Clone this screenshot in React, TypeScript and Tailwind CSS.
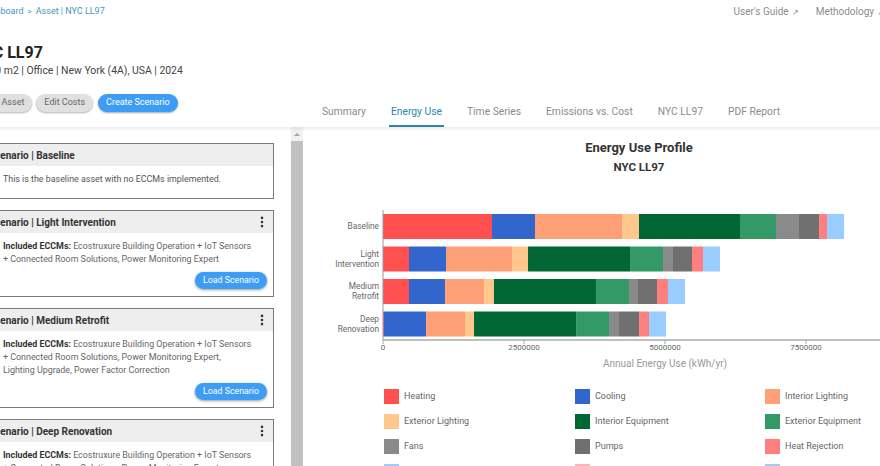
import { EllipsisVertical } from "lucide-react";

const categories = [
  { name: "Heating", color: "#ff4f4f" },
  { name: "Cooling", color: "#3366cc" },
  { name: "Interior Lighting", color: "#ff9f77" },
  { name: "Exterior Lighting", color: "#ffc78c" },
  { name: "Interior Equipment", color: "#006633" },
  { name: "Exterior Equipment", color: "#339966" },
  { name: "Fans", color: "#8a8a8a" },
  { name: "Pumps", color: "#707070" },
  { name: "Heat Rejection", color: "#ff7f7f" },
  { name: "Humidification", color: "#99ccff" },
  { name: "Heat Recovery", color: "#ffb3b3" },
  { name: "Water Systems", color: "#a8c8f0" },
  { name: "Refrigeration", color: "#c6a4e6" },
  { name: "Generators", color: "#e6d27a" },
];

// kWh/yr per end use, same order as categories
const rows = [
  { label: ["Baseline"], values: [1933000, 762000, 1543000, 301000, 1791000, 638000, 408000, 355000, 142000, 301000] },
  { label: ["Light", "Intervention"], values: [461000, 656000, 1170000, 284000, 1809000, 585000, 177000, 337000, 195000, 301000] },
  { label: ["Medium", "Retrofit"], values: [461000, 638000, 691000, 177000, 1809000, 585000, 160000, 337000, 195000, 301000] },
  { label: ["Deep", "Renovation"], values: [18000, 745000, 691000, 160000, 1809000, 585000, 177000, 355000, 177000, 301000] },
];

const scenarios = [
  { name: "Light Intervention", lines: ["Ecostruxure Building Operation + IoT Sensors", "+ Connected Room Solutions, Power Monitoring Expert"] },
  { name: "Medium Retrofit", lines: ["Ecostruxure Building Operation + IoT Sensors", "+ Connected Room Solutions, Power Monitoring Expert,", "Lighting Upgrade, Power Factor Correction"] },
  { name: "Deep Renovation", lines: ["Ecostruxure Building Operation + IoT Sensors", "+ Connected Room Solutions, Power Monitoring Expert,", "Lighting Upgrade, Power Factor Correction, HVAC Upgrade"] },
];

const tabs = ["Summary", "Energy Use", "Time Series", "Emissions vs. Cost", "NYC LL97", "PDF Report"];

function EnergyChart() {
  const x0 = 79;
  const scale = 141 / 2500000;
  const axisY = 213;
  return (
    <svg width="590" height="253" className="block">
      <text x="335" y="24.5" textAnchor="middle" fontSize="13" fontWeight="700" fill="#333">
        Energy Use Profile
      </text>
      <text x="335" y="44" textAnchor="middle" fontSize="11.5" fontWeight="700" fill="#333">
        NYC LL97
      </text>
      {rows.map((row, i) => {
        const top = 87 + i * 32.5;
        let x = x0;
        return (
          <g key={i}>
            {row.values.map((v, j) => {
              const w = v * scale;
              const rect = <rect key={j} x={x} y={top} width={w} height={25} fill={categories[j].color} />;
              x += w;
              return rect;
            })}
            {row.label.map((l, k) => (
              <text
                key={k}
                x="75"
                y={top + 15 + (k - (row.label.length - 1) / 2) * 10}
                textAnchor="end"
                fontSize="8.3"
                fill="#666"
              >
                {l}
              </text>
            ))}
          </g>
        );
      })}
      <line x1={x0} y1="83" x2={x0} y2={axisY} stroke="#999" strokeWidth="1" />
      <line x1={x0} y1={axisY} x2="590" y2={axisY} stroke="#aaa" strokeWidth="1.5" />
      {[0, 2500000, 5000000, 7500000].map((t) => (
        <g key={t}>
          <line x1={x0 + t * scale} y1={axisY} x2={x0 + t * scale} y2={axisY + 4} stroke="#aaa" />
          <text x={x0 + t * scale} y="222.5" textAnchor="middle" fontSize="8" fill="#666">
            {t}
          </text>
        </g>
      ))}
      <text x="361" y="240" textAnchor="middle" fontSize="10" fill="#999">
        Annual Energy Use (kWh/yr)
      </text>
    </svg>
  );
}

function Card({ name, children, menu = true }: { name: string; children: React.ReactNode; menu?: boolean }) {
  return (
    <div className="border border-[#7a7a7a] bg-white">
      <div className="h-[22px] bg-[#eeeeee] flex items-center justify-between pl-[10px] pr-[4px]">
        <span className="text-[10px] font-bold text-[#333]">Scenario | {name}</span>
        {menu && <EllipsisVertical size={14} strokeWidth={2.5} className="text-[#333]" />}
      </div>
      {children}
    </div>
  );
}

export default function App() {
  return (
    <div className="w-[880px] h-[466px] overflow-hidden bg-white font-[Roboto,sans-serif]">
      <div className="-ml-[28px] w-[922px] h-full flex flex-col">
        <div className="h-[22px] pt-[1px] flex items-center justify-between pl-[8px] pr-[10px]">
          <div className="flex items-center gap-[4px] text-[9px] text-[#4796bd]">
            <span>Dashboard</span>
            <span className="text-[8px]">&gt;</span>
            <span>Asset | NYC LL97</span>
          </div>
          <div className="flex items-center gap-[17px] text-[10px] text-[#8c8c8c]">
            <span>
              User's Guide<span className="text-[8px] ml-[3px]">↗</span>
            </span>
            <span>
              Methodology<span className="text-[8px] ml-[3px]">↗</span>
            </span>
          </div>
        </div>

        <div className="flex relative z-10 shadow-[0_2px_3px_rgba(0,0,0,0.08)]">
          <div className="w-[332px] pt-[21px] pb-[15px]">
            <div className="text-[16px] leading-[20px] font-bold text-[#222]">NYC LL97</div>
            <div className="text-[10.4px] leading-[16px] text-[#444]">10000 m2 | Office | New York (4A), USA | 2024</div>
            <div className="flex gap-[4px] mt-[15px] ml-[4px]">
              <button className="h-[18px] px-[8px] rounded-full bg-[#e0e0e0] text-[9px] text-[#666] shadow-[0_1px_2px_rgba(0,0,0,0.3)]">
                Edit Asset
              </button>
              <button className="h-[18px] px-[8px] rounded-full bg-[#e0e0e0] text-[9px] text-[#666] shadow-[0_1px_2px_rgba(0,0,0,0.3)]">
                Edit Costs
              </button>
              <button className="h-[18px] px-[8px] ml-[1px] rounded-full bg-[#3d9cf5] text-[9px] text-white shadow-[0_1px_2px_rgba(0,0,0,0.35)]">
                Create Scenario
              </button>
            </div>
          </div>
          <div className="flex items-end gap-[21px] ml-[16px]">
            {tabs.map((t) => (
              <div
                key={t}
                className={
                  t === "Energy Use"
                    ? "px-[2px] pb-[5px] text-[10.3px] leading-[16px] text-[#2a86b3] border-b-2 border-[#2a86b3]"
                    : "px-[2px] pb-[5px] text-[10.3px] leading-[16px] text-[#8c8c8c] border-b-2 border-transparent"
                }
              >
                {t}
              </div>
            ))}
          </div>
        </div>

        <div className="flex flex-1 min-h-0">
          <div className="w-[332px] flex">
            <div className="w-[319px] pl-[6px] pr-[17px] pt-[16px] flex flex-col gap-[11px]">
              <Card name="Baseline" menu={false}>
                <div className="pl-[24px] pt-[7px] pb-[12px] text-[8.9px] leading-[13px] text-[#555]">
                  This is the baseline asset with no ECCMs implemented.
                </div>
              </Card>
              {scenarios.map((s) => (
                <Card key={s.name} name={s.name}>
                  <div className="pl-[24px] pr-[6px] pt-[7px] pb-[7px]">
                    <div className="text-[8.9px] leading-[13px] text-[#666] whitespace-nowrap">
                      {s.lines.map((l, i) => (
                        <div key={i}>
                          {i === 0 && <span className="font-bold text-[#333]">Included ECCMs: </span>}
                          {l}
                        </div>
                      ))}
                    </div>
                    <div className="flex justify-end mt-[6px]">
                      <button className="h-[17px] px-[8px] rounded-full bg-[#3d9cf5] text-[8.8px] text-white shadow-[0_1px_3px_rgba(0,0,0,0.4)]">
                        Load Scenario
                      </button>
                    </div>
                  </div>
                </Card>
              ))}
            </div>
            <div className="w-[12px] bg-[#f1f1f1] flex flex-col">
              <div className="h-[14px] flex items-center justify-center">
                <div className="w-0 h-0 border-l-[3px] border-r-[3px] border-b-[3px] border-l-transparent border-r-transparent border-b-[#a3a3a3]" />
              </div>
              <div className="flex-1 bg-[#c1c1c1]" />
            </div>
          </div>

          <div className="flex-1 min-w-0">
            <EnergyChart />
            <div className="grid grid-cols-[191px_190px_191px] gap-y-[10px] pl-[80px] mt-[9px]">
              {categories.map((c) => (
                <div key={c.name} className="flex items-center gap-[5px] h-[15px]">
                  <div className="w-[15px] h-[15px]" style={{ backgroundColor: c.color }} />
                  <span className="text-[9px] text-[#666]">{c.name}</span>
                </div>
              ))}
            </div>
          </div>
        </div>
      </div>
    </div>
  );
}
